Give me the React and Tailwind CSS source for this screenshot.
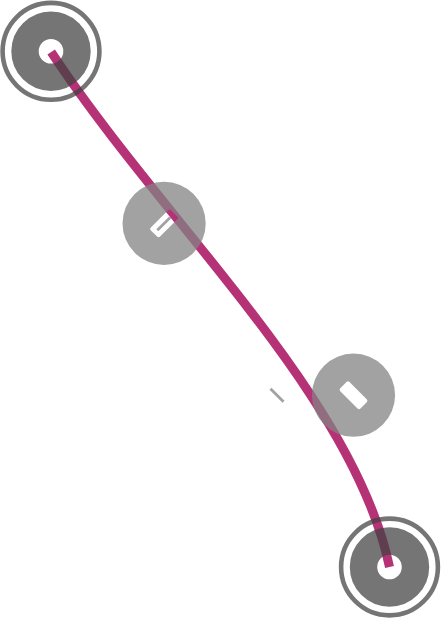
const endpoints = [
  { x: 51, y: 51.3 },
  { x: 389.5, y: 567 },
];

const handles = [
  { x: 164.1, y: 223.4, angle: -45 },
  { x: 353.5, y: 395.2, angle: 45 },
];

function Endpoint({ x, y }) {
  return (
    <g transform={`translate(${x} ${y})`} fill="none" stroke="#424242" strokeOpacity="0.73">
      <circle r="48.4" strokeWidth="4.6" />
      <circle r="26" strokeWidth="27.4" />
    </g>
  );
}

function Handle({ x, y, angle }) {
  return (
    <g transform={`translate(${x} ${y}) rotate(${angle})`}>
      <path
        fill="#838383"
        fillOpacity="0.75"
        fillRule="evenodd"
        d="M-41.6 0a41.6 41.6 0 1 0 83.2 0a41.6 41.6 0 1 0 -83.2 0Z M-12.2 -6.5H12.2Q14.3 -6.5 14.3 -4.4V4.4Q14.3 6.5 12.2 6.5H-12.2Q-14.3 6.5 -14.3 4.4V-4.4Q-14.3 -6.5 -12.2 -6.5Z"
      />
    </g>
  );
}

export default function App() {
  return (
    <main className="h-[618px] w-[442px] overflow-hidden bg-white">
      <svg className="block h-full w-full" viewBox="0 0 442 618" role="img" aria-label="Curve editor">
        <path d="M51.2 52C164 223.4 353.5 395.2 389.5 567" fill="none" stroke="#b63277" strokeWidth="9" />
        {endpoints.map((point) => (
          <Endpoint key={point.x} {...point} />
        ))}
        {handles.map((handle) => (
          <Handle key={handle.x} {...handle} />
        ))}
        <path d="M157.3 230.2L170.2 217.6" stroke="#a2a2a2" strokeWidth="2.8" />
        <path d="M270.5 388.8L283.5 401.8" stroke="#a2a2a2" strokeWidth="2.8" />
      </svg>
    </main>
  );
}
